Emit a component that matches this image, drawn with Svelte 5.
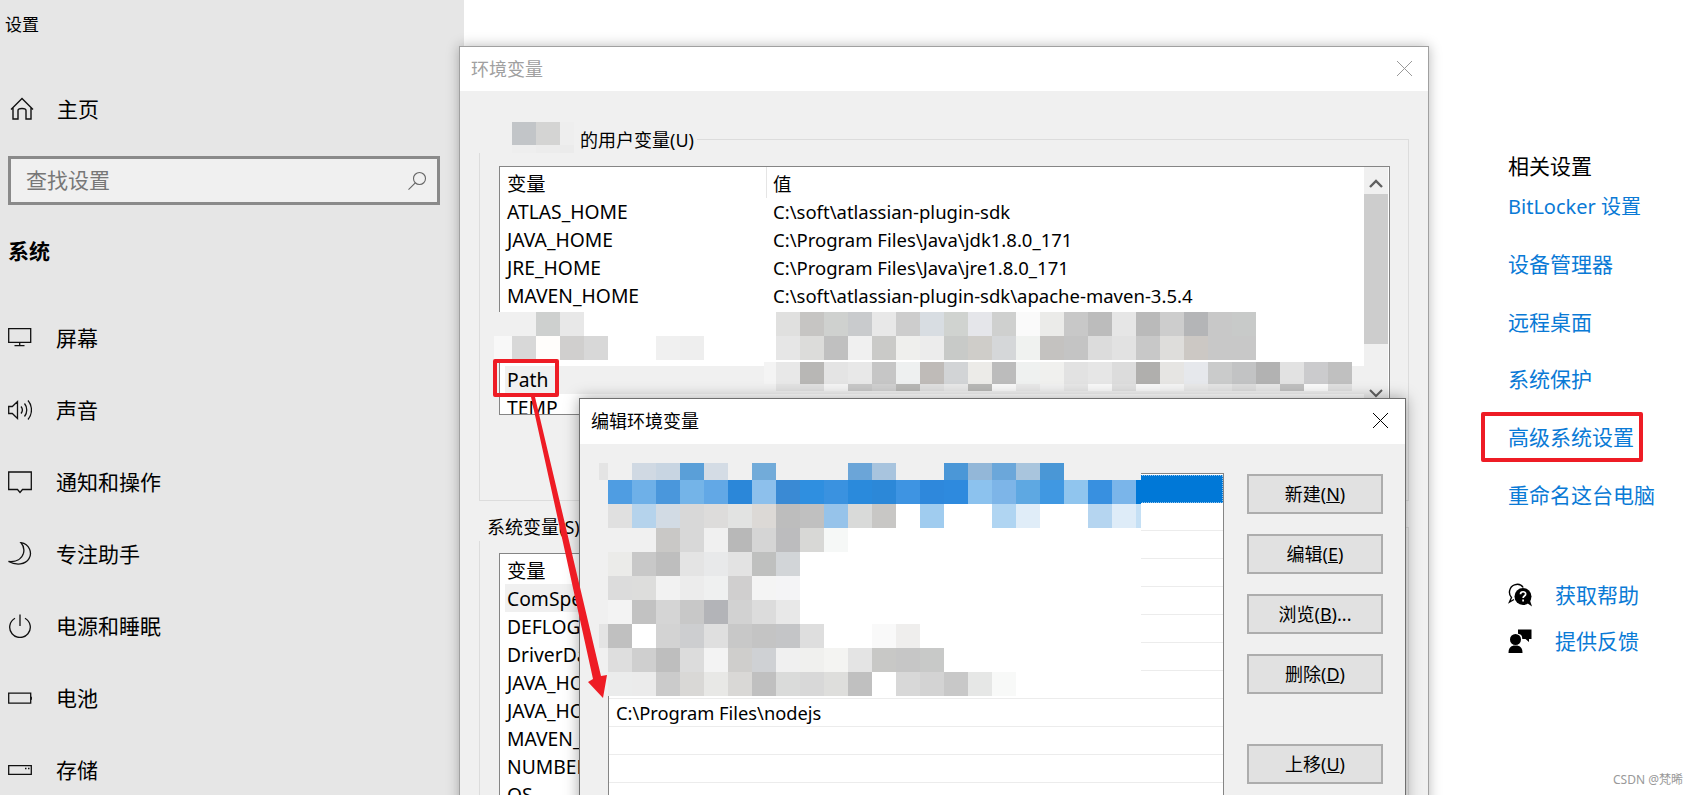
<script>
	const navItems = ['屏幕', '声音', '通知和操作', '专注助手', '电源和睡眠', '电池', '存储'];
	const links = ['设备管理器', '远程桌面', '系统保护', '高级系统设置', '重命名这台电脑'];
	const userVars = [
		['ATLAS_HOME', 'C:\\soft\\atlassian-plugin-sdk'],
		['JAVA_HOME', 'C:\\Program Files\\Java\\jdk1.8.0_171'],
		['JRE_HOME', 'C:\\Program Files\\Java\\jre1.8.0_171'],
		['MAVEN_HOME', 'C:\\soft\\atlassian-plugin-sdk\\apache-maven-3.5.4'],
		['', ''],
		['', ''],
		['Path', ''],
		['TEMP', '']
	];
	const sysVars = ['ComSpec', 'DEFLOG', 'DriverData', 'JAVA_HOME', 'JAVA_HOME', 'MAVEN_HOME', 'NUMBER', 'OS'];
	const buttons = [
		['新建(', 'N', ')'],
		['编辑(', 'E', ')'],
		['浏览(', 'B', ')...'],
		['删除(', 'D', ')']
	];
	const editRows = Array.from({ length: 11 }, (_, i) => (i === 7 ? 'C:\\Program Files\\nodejs' : ''));

	// blurred-out pixels, one string per row, "-" = mosaic's fill colour
	const parse = (rows) => rows.map((r) => r.split(' '));

	const mosaicName = parse([
		'f0f0f0 f0f0f0 ced0cf e8e8e8 - - - - -',
		'f8f8f8 d8d8d8 fffdfb d0cfce d8d8d8 - - f0f0f0 eeeeee'
	]);
	const mosaicValue = parse([
		'e0e0df c6c5c3 cfd1cf c9cbcd e8e8e8 cdcdcd d8dde2 d0d3d0 e5e6ea cfd0cf fafafa ebebe9 c8c8c8 bcbcbc e6e6e6 bababa cdcdcd b4b5b7 c8c8c8 c8cac9',
		'e6e6e6 dcdcda c0c0c0 f0f0f0 cacac8 efefed ececec c8cac8 cfcdc9 d5d7d9 f0f2f0 c4c2c0 c4c4c4 dcdcdc e2e2e2 c8c8c8 dedddb ccc8c4 c8c8c8 c8c8c8'
	]);
	const mosaicPath = parse([
		'f4f4f4 e8e8e8 b8b7b5 e4e4e4 e8e8e8 c6c6c6 eef0f0 bfbbb8 d2d4d6 ecebe8 bcbcbc eff1f0 f0f0ee e2e2e2 e6e6e6 dcdcdc b0afad e6e5e3 e6e8ec cacbcb c2c3c4 b2b2b2 e2e2e2 cbcbcd c0c0c0',
		'f0f0f0 e2e2e2 e0e0e0 f4f4f4 c8c8c8 d0d0d0 b8b8b6 e0e0e0 e8e8e8 b8b8b6 f8f8f8 e8e8e8 f0f0f0 e6e6e6 f8f8f8 e0e0e0 f8f8f8 f4f4f4 e8e8e8 e4e4e4 dcdcdc e6e6e6 c0c0c0 fafafa e0e0e0'
	]);
	const mosaicUser = parse(['c2c5c8 d4d4d3 eeeeee', 'eeeeee ececec ebebeb']);

	const mosaicEdit = parse([
		'e4e4e4 - d0d9e3 c8d5e2 5a9fd8 d4dce5 - 72abd9 - - - 6ba5d8 a8c4de - - 4b97d7 93b7d8 6ba7da a9c5dd 4a97d6 - - - -',
		'f0f0f0 4f9de2 6eb0e8 4a97dc 74b4e8 62a8e6 2b87d9 8dc0ec 3a8ad4 2f8fe0 3a92e0 2a8adc 2c88d8 3e94e2 2e88dc 2e8ade 8cc2ee 7db5e8 5ea8e2 4098e2 90c5ee 3890e0 7ab5ea 0078d7',
		'f0f0f0 e0e0e0 b5d3ec d2dbe4 d8d8d8 dddcdb e2e3e2 dcd9d6 bdbdbd c0c0c0 96c3ea d9dad9 c8c7c5 ffffff a0ccef ffffff ffffff b0d5f2 e0edf8 ffffff ffffff b5d5f0 deecf8 c5e0f5',
		'f0f0f0 f0f0f0 f0f0f0 c9c8c6 d8d8d8 f0f0f0 b8b8b8 d5d5d5 bcbcbe d8d8d6 f6f8f7 ffffff ffffff ffffff ffffff ffffff ffffff ffffff ffffff ffffff ffffff ffffff ffffff ffffff',
		'f0f0f0 ebebe9 c8c8c8 bebebe e4e4e4 e8e9ea e3e3e3 bfc0bf d2d5d8 ffffff ffffff ffffff ffffff ffffff ffffff ffffff ffffff ffffff ffffff ffffff ffffff ffffff ffffff ffffff',
		'f0f0f0 dcdcdc dddddc f2f2f2 ececec eff0f0 d0cfcf f4f4f4 f4f4f6 ffffff ffffff ffffff ffffff ffffff ffffff ffffff ffffff ffffff ffffff ffffff ffffff ffffff ffffff ffffff',
		'f0f0f0 f3f3f3 c2c2c2 d5d5d5 c8c8c8 b3b4b8 d2d2d2 dcdcdc e8e8e8 ffffff ffffff ffffff ffffff ffffff ffffff ffffff ffffff ffffff ffffff ffffff ffffff ffffff ffffff ffffff',
		'e4e4e4 c0c0c0 ffffff d3d3d3 cdced0 dfdfdf c8c8c8 c4c4c4 c4c5c7 dedede ffffff ffffff f9f9f9 efeeed ffffff ffffff ffffff ffffff ffffff ffffff ffffff ffffff ffffff ffffff',
		'f0f0f0 dedede cfcfcf bebebe dcdcdc f3f3f3 cfcecc cfd1d4 f0f0f0 f0f0ee f4f4f2 e4e4e4 c8c8c6 c6c6c6 c8c9c8 ffffff ffffff ffffff ffffff ffffff ffffff ffffff ffffff ffffff',
		'f0f0f0 ebecec ebebeb cbcbcb d9d8d6 e8e8e6 d9d8d6 c0c0c0 dadbda d8d8d8 dededc c0c0c0 ffffff d8d8d8 d3d3d3 c8c8c8 e6e7e6 f8f9f8 ffffff ffffff ffffff ffffff ffffff ffffff'
	]);
</script>

{#snippet mosaic(rows, cls, fill)}
	<div class="mosaic {cls}">
		{#each rows as row}
			{#each row as c}
				<i style="background:{c === '-' ? fill : '#' + c}"></i>
			{/each}
		{/each}
	</div>
{/snippet}

{#snippet navIcon(i)}
	<svg class="icon" width="24" height="24" viewBox="0 0 24 24" fill="none" stroke="#111" stroke-width="1.3">
		{#if i === 0}
			<path d="M0.7 2.7h22v13.6h-22zM11.7 16.3v3.2M6.5 19.7h10" />
		{:else if i === 1}
			<path d="M0.7 8.5h3.6l5.2-5v17l-5.2-5H0.7zM13 8.5c1.6 2 1.6 5 0 7M16.5 5.5c3 3.6 3 9.400 0 13M20 2.500c4.600 5.400 4.600 13.600 0 19" />
		{:else if i === 2}
			<path d="M0.700 2h22.600v17.500h-8.800l-2.500 3-2.500-3H0.700z" />
		{:else if i === 3}
			<path d="M13 0.700c8.500 1.500 11.500 10 8 16-3.600 6-12.500 7-20.500 2.800 8 .7 13.500-2.700 15-8.300 1-4.200-.2-8-2.500-10.500z" />
		{:else if i === 4}
			<path d="M12 0.500v11.500M7 4.200a10.300 10.300 0 1 0 10 0" />
		{:else if i === 5}
			<path d="M0.700 7.200h22v10h-22zM23.300 10.800v3" />
		{:else}
			<path d="M0.700 7.700h22.600v8.600H0.700zM17 10.500h1.500M20 10.500h1.500" />
		{/if}
	</svg>
{/snippet}

<div class="page">
	<aside class="side">
		<div class="app-title">设置</div>
		<div class="home">
			<svg class="icon" width="24" height="24" viewBox="0 0 24 24" fill="none" stroke="#111" stroke-width="1.4">
				<path d="M1 12.500L12 1.500l11 11M3 10.500V22h5v-8.500a4 2 0 0 1 8 0V22h5V10.500" />
			</svg>
			<span class="lift">主页</span>
		</div>
		<div class="search">
			<span class="lift">查找设置</span>
			<svg width="20" height="20" viewBox="0 0 20 20" fill="none" stroke="#666" stroke-width="1.100">
				<circle cx="12.500" cy="7.500" r="6" /><path d="M8.300 11.800L1.500 18.700" />
			</svg>
		</div>
		<div class="section">系统</div>
		<nav>
			{#each navItems as item, i}
				<div class="nav-item">
					{@render navIcon(i)}
					<span class="lift">{item}</span>
				</div>
			{/each}
		</nav>
	</aside>

	<section class="related">
		<h3>相关设置</h3>
		<div class="link bitlocker">BitLocker 设置</div>
		{#each links as link}
			<div class="link">{link}</div>
		{/each}
		<div class="help">
			<div class="help-row">
				<svg width="24" height="24" viewBox="0 0 24 24">
					<path d="M6 16.500 1.500 19l2-4.500C0 11 1 3.800 6.500 1.800c3.500-1.200 7 0 8.700 2.700" fill="none" stroke="#000" stroke-width="1.400" />
					<circle cx="15" cy="13.500" r="8.500" fill="#000" />
					<path d="M19 20l5 3.500-2-6z" fill="#000" />
					<path d="M12.500 11.200c0-3.200 5.200-3.200 5.200-.2 0 2-2.600 2-2.600 4M15.100 16.400v2" fill="none" stroke="#fff" stroke-width="1.700" />
				</svg>
				<span class="link-text">获取帮助</span>
			</div>
			<div class="help-row">
				<svg width="24" height="24" viewBox="0 0 24 24" fill="#000">
					<path d="M10 .5h13.500v9.500h-2.500v3l-3.500-3h-3.300C14.500 6.800 13 5 10 4.700z" />
					<circle cx="7.500" cy="10.500" r="5.500" />
					<path d="M0.500 24c0-5 2-7.500 7-7.500s7 2.500 7 7.500z" />
				</svg>
				<span class="link-text">提供反馈</span>
			</div>
		</div>
	</section>

	<div class="win env">
		<div class="titlebar">
			<span class="muted-title">环境变量</span>
			<svg class="close" width="15" height="15" viewBox="0 0 15 15" stroke="#999" stroke-width="1"><path d="M0 0l15 15M15 0L0 15" /></svg>
		</div>
		<div class="group user-group">
			<div class="group-label user-label">
				{@render mosaic(mosaicUser, 'm-user', 'transparent')}
				<span>的用户变量(U)</span>
			</div>
			<div class="list user-list">
				<div class="rows">
					<div class="row header"><span class="name">变量</span><span class="val">值</span></div>
					{#each userVars as [n, v]}
						<div class="row" class:hot={n === 'Path'}><span class="name">{n}</span><span class="val">{v}</span></div>
					{/each}
				</div>
				<div class="scrollbar">
					<svg width="24" height="27" viewBox="0 0 24 27" fill="none" stroke="#606060" stroke-width="2.400"><path d="M6 20l6-6 6 6" /></svg>
					<div class="thumb"></div>
					<svg class="down" width="24" height="16" viewBox="0 0 24 16" fill="none" stroke="#606060" stroke-width="2"><path d="M6 3l6 6 6-6" /></svg>
				</div>
			</div>
		</div>
		<div class="group sys-group">
			<div class="group-label sys-label">系统变量(S)</div>
			<div class="list sys-list">
				<div class="rows">
					<div class="row header"><span class="name">变量</span><span class="val">值</span></div>
					{#each sysVars as n, i}
						<div class="row" class:hot={i === 0}><span class="name">{n}</span></div>
					{/each}
				</div>
			</div>
		</div>
		{@render mosaic(mosaicName, 'm-name', 'transparent')}
		{@render mosaic(mosaicValue, 'm-value', 'transparent')}
		{@render mosaic(mosaicPath, 'm-path', 'transparent')}
	</div>

	<div class="win edit">
		<div class="titlebar edit-title">
			<span class="lift">编辑环境变量</span>
			<svg class="close" width="15" height="15" viewBox="0 0 15 15" stroke="#000" stroke-width="1"><path d="M0 0l15 15M15 0L0 15" /></svg>
		</div>
		<div class="edit-body">
			<div class="edit-list">
				<div class="edit-row selected"></div>
				{#each editRows as text}
					<div class="edit-row">{text}</div>
				{/each}
			</div>
			<div class="buttons">
				{#each buttons as [a, key, b]}
					<div class="btn">{a}<u>{key}</u>{b}</div>
				{/each}
				<div class="btn spaced">上移(<u>U</u>)</div>
			</div>
		</div>
		{@render mosaic(mosaicEdit, 'm-edit', '#f0f0f0')}
	</div>

	<div class="mark path-mark"></div>
	<div class="mark advanced-mark"></div>
	<svg class="arrow" width="1698" height="795" viewBox="0 0 1698 795">
		<path d="M531 397h4l66 279 6-1-4 23-15-16 5-3z" fill="#ee1c25" />
	</svg>
	<div class="watermark">CSDN @梵晞</div>
</div>

<style>
	:global(body) {
		margin: 0;
	}

	.page {
		position: relative;
		display: flex;
		justify-content: space-between;
		width: 1698px;
		height: 795px;
		overflow: hidden;
		background: #fff;
		color: #000;
		font-family: 'Noto Sans', 'Noto Sans CJK SC', sans-serif;
	}

	/* Noto's CJK glyphs sit a little low compared to the original UI font */
	.lift {
		padding-bottom: 3px;
	}

	/* settings sidebar */
	.side {
		box-sizing: border-box;
		width: 464px;
		height: 795px;
		background: #e6e6e6;
		font-size: 21px;
	}

	.app-title {
		height: 50px;
		padding-left: 5px;
		font-size: 17px;
		line-height: 50px;
	}

	.home {
		display: flex;
		align-items: center;
		gap: 23px;
		height: 72px;
		padding: 0 0 0 10px;
		box-sizing: border-box;
		margin-top: 23px;
	}

	.search {
		display: flex;
		align-items: center;
		justify-content: space-between;
		box-sizing: border-box;
		width: 432px;
		height: 49px;
		margin: 11px 0 0 8px;
		padding: 0 10px 0 15px;
		border: 3px solid #8a8a8a;
		background: #f0f0f0;
		color: #777;
	}

	.section {
		margin: 16px 0 21px 8px;
		font-weight: 700;
		line-height: 60px;
	}

	.nav-item {
		display: flex;
		align-items: center;
		gap: 24px;
		height: 72px;
		padding-left: 8px;
	}

	.icon {
		flex: none;
	}

	/* related links on the right */
	.related {
		box-sizing: border-box;
		width: 190px;
		padding-top: 153px;
		font-size: 21px;
	}

	.related h3 {
		margin: 0 0 -1px;
		font-size: 21px;
		font-weight: 400;
		line-height: 26px;
	}

	.link {
		height: 57.8px;
		line-height: 57.8px;
		color: #0a7ad6;
		white-space: nowrap;
	}

	.bitlocker {
		font-size: 20px;
	}

	.help {
		margin-top: 47px;
	}

	.help-row {
		display: flex;
		align-items: center;
		gap: 23px;
		height: 46px;
	}

	.link-text {
		color: #0a7ad6;
		padding-bottom: 1px;
	}

	/* dialogs */
	.win {
		position: absolute;
		box-sizing: border-box;
		background: #f0f0f0;
		font-size: 18px;
	}

	.env {
		left: 459px;
		top: 46px;
		width: 970px;
		height: 780px;
		border: 1px solid #a0a0a0;
		box-shadow: 0 0 12px rgba(0, 0, 0, 0.28);
	}

	.edit {
		left: 579px;
		top: 398px;
		width: 827px;
		height: 420px;
		border: 1px solid #6e6e6e;
		box-shadow: 0 0 14px rgba(0, 0, 0, 0.35);
	}

	.titlebar {
		position: relative;
		display: flex;
		align-items: center;
		height: 44px;
		padding-left: 11px;
		background: #fff;
	}

	.muted-title {
		color: #a0a0a0;
		padding-bottom: 2px;
	}

	.edit-title {
		height: 45px;
	}

	.close {
		position: absolute;
		right: 16px;
		top: 14px;
	}

	.edit .close {
		right: 17px;
		top: 14px;
	}

	.group {
		position: relative;
		box-sizing: border-box;
		width: 930px;
		margin-left: 19px;
		padding-left: 19px;
		border: 1px solid #dcdcdc;
	}

	.user-group {
		height: 362px;
		margin-top: 48px;
		padding-top: 26px;
	}

	.sys-group {
		height: 400px;
		margin-top: 26px;
		padding-top: 25px;
	}

	.group-label {
		position: absolute;
		background: #f0f0f0;
	}

	.user-label {
		left: -1px;
		top: -18px;
		display: flex;
		width: 218px;
		height: 31px;
		padding-left: 33px;
		box-sizing: border-box;
		gap: 6px;
		line-height: 36px;
	}

	.sys-label {
		left: -1px;
		top: -13px;
		padding: 0 0 2px 8px;
		line-height: 24px;
	}

	.list {
		display: flex;
		box-sizing: border-box;
		width: 891px;
		border: 1px solid #858585;
		background: #fff;
		overflow: hidden;
	}

	.user-list {
		height: 249px;
	}

	.sys-list {
		height: 300px;
	}

	.rows {
		flex: 1;
		min-width: 0;
	}

	.row {
		display: flex;
		height: 28px;
		margin-left: 5px;
		line-height: 28px;
		white-space: nowrap;
	}

	.sys-list .row {
		line-height: 30px;
	}

	.row.header,
	.sys-list .row.header {
		height: 31px;
		line-height: 33px;
	}

	.sys-list .row.header {
		height: 30px;
	}

	.row.hot {
		background: #f0f0f0;
	}

	.name {
		box-sizing: border-box;
		flex: none;
		width: 261px;
		padding-left: 2px;
		font-size: 19.3px;
	}

	.val {
		padding-left: 7px;
		font-size: 18.5px;
	}

	.header .val {
		flex: 1;
		border-left: 1px solid #e5e5e5;
		padding-left: 6px;
	}

	.scrollbar {
		flex: none;
		width: 24px;
		margin-right: 1px;
		background: #f0f0f0;
	}

	.scrollbar svg {
		display: block;
	}

	.thumb {
		height: 150px;
		background: #cdcdcd;
	}

	.scrollbar .down {
		margin-top: 43px;
	}

	/* buttons and path list in the edit dialog */
	.edit-body {
		display: flex;
		align-items: flex-start;
		gap: 23px;
		padding: 29px 0 0 28px;
	}

	.edit-list {
		box-sizing: border-box;
		flex: none;
		width: 616px;
		height: 340px;
		padding-top: 1px;
		border: 1px solid #858585;
		background: #fff;
	}

	.edit-row {
		box-sizing: border-box;
		height: 28px;
		padding-left: 7px;
		border-bottom: 1px solid #ececec;
		font-size: 18.3px;
		line-height: 28px;
	}

	.edit-row.selected {
		background: #0078d7;
		outline: 1px dotted #8fc2ec;
		outline-offset: -1px;
		border-bottom: 0;
	}

	.buttons {
		display: flex;
		flex-direction: column;
		gap: 20px;
		margin-top: 1px;
	}

	.btn {
		box-sizing: border-box;
		width: 136px;
		height: 40px;
		border: 2px solid #adadad;
		background: #e1e1e1;
		text-align: center;
		line-height: 36px;
	}

	.btn.spaced {
		margin-top: 30px;
	}

	/* pixelated patches */
	.mosaic {
		position: absolute;
		display: grid;
	}

	.mosaic i {
		display: block;
	}

	.m-user {
		position: static;
		grid-template-columns: 24px 24px 14px;
		grid-template-rows: 23px 8px;
		flex: none;
	}

	.m-name {
		left: 34px;
		top: 265px;
		grid-template-columns: 18px repeat(8, 24px);
		grid-auto-rows: 24px;
	}

	.m-value {
		left: 316px;
		top: 265px;
		grid-template-columns: repeat(20, 24px);
		grid-auto-rows: 24px;
	}

	.m-path {
		left: 304px;
		top: 315px;
		grid-template-columns: 12px repeat(24, 24px);
		grid-template-rows: 22px 7px;
	}

	.m-edit {
		left: 19px;
		top: 64px;
		grid-template-columns: 9px repeat(22, 24px) 5px;
		grid-template-rows: 17px repeat(9, 24px);
	}

	/* red annotations on top of the screenshot */
	.mark {
		position: absolute;
		box-sizing: border-box;
		border: 4px solid #ee1c25;
		border-radius: 2px;
	}

	.path-mark {
		left: 493px;
		top: 359px;
		width: 66px;
		height: 38px;
	}

	.advanced-mark {
		left: 1481px;
		top: 412px;
		width: 162px;
		height: 50px;
	}

	.arrow {
		position: absolute;
		left: 0;
		top: 0;
		pointer-events: none;
	}

	.watermark {
		position: absolute;
		right: 15px;
		bottom: 7px;
		color: #999;
		font-size: 12px;
	}
</style>
